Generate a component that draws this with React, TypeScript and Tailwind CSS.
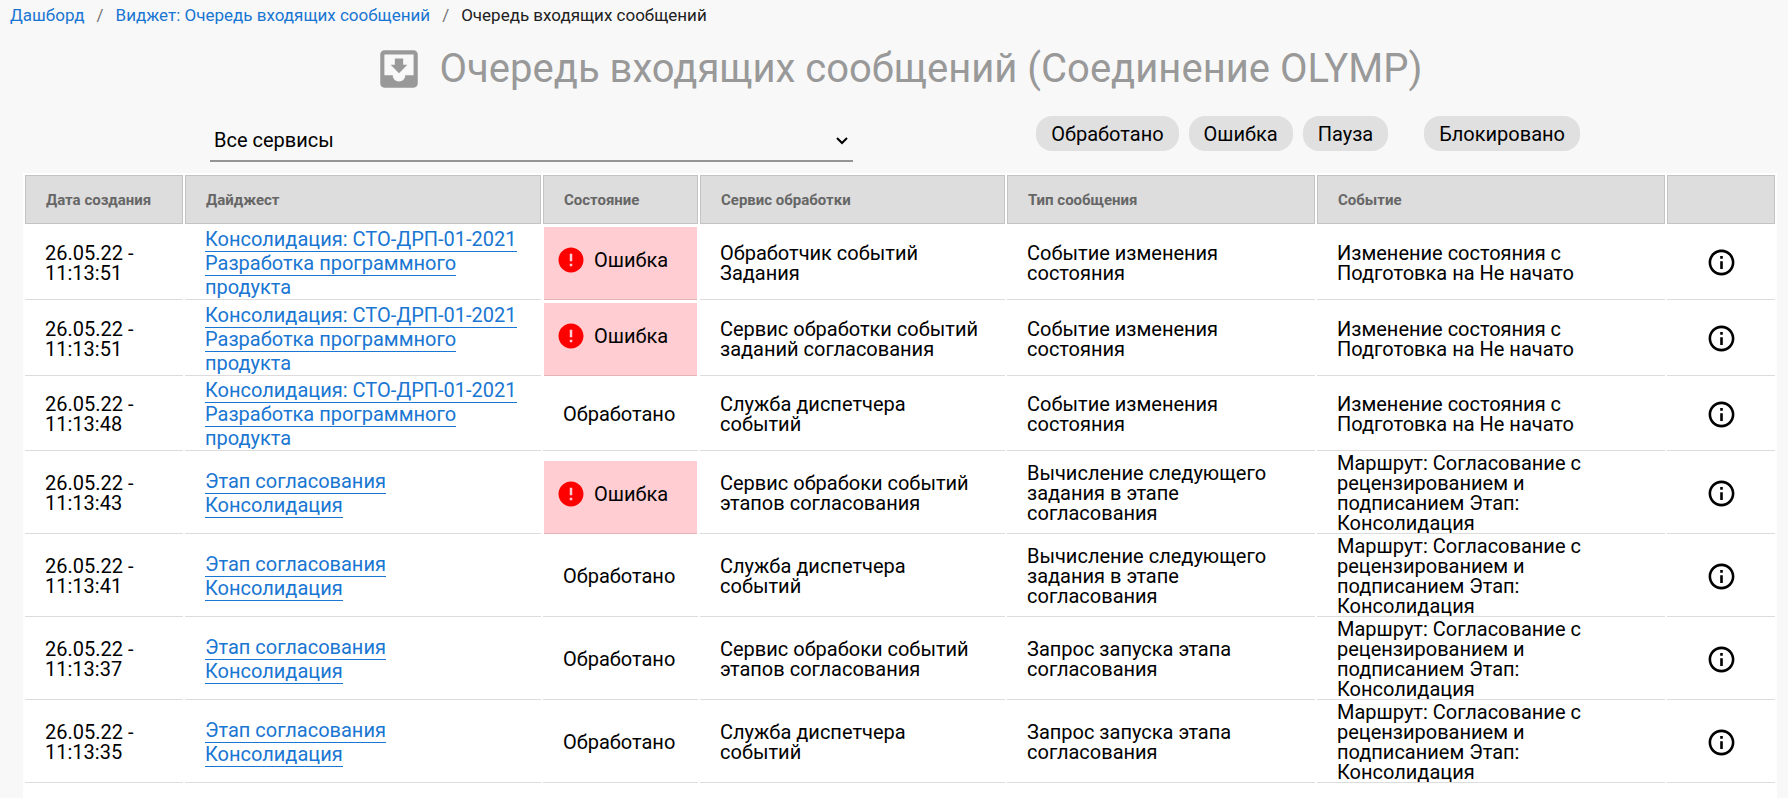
import { MdError, MdInfoOutline, MdMoveToInbox } from "react-icons/md";

type Message = {
  created: string;
  digest: string;
  failed: boolean;
  service: string;
  type: string;
  event: string;
};

const project = "Консолидация: СТО-ДРП-01-2021 Разработка программного продукта";
const stage = "Этап согласования Консолидация";
const stateChange = "Изменение состояния с Подготовка на Не начато";
const route = "Маршрут: Согласование с рецензированием и подписанием Этап: Консолидация";

const messages: Message[] = [
  { created: "26.05.22 - 11:13:51", digest: project, failed: true, service: "Обработчик событий Задания", type: "Событие изменения состояния", event: stateChange },
  { created: "26.05.22 - 11:13:51", digest: project, failed: true, service: "Сервис обработки событий заданий согласования", type: "Событие изменения состояния", event: stateChange },
  { created: "26.05.22 - 11:13:48", digest: project, failed: false, service: "Служба диспетчера событий", type: "Событие изменения состояния", event: stateChange },
  { created: "26.05.22 - 11:13:43", digest: stage, failed: true, service: "Сервис обрабоки событий этапов согласования", type: "Вычисление следующего задания в этапе согласования", event: route },
  { created: "26.05.22 - 11:13:41", digest: stage, failed: false, service: "Служба диспетчера событий", type: "Вычисление следующего задания в этапе согласования", event: route },
  { created: "26.05.22 - 11:13:37", digest: stage, failed: false, service: "Сервис обрабоки событий этапов согласования", type: "Запрос запуска этапа согласования", event: route },
  { created: "26.05.22 - 11:13:35", digest: stage, failed: false, service: "Служба диспетчера событий", type: "Запрос запуска этапа согласования", event: route },
];

const columns = [
  { label: "Дата создания", width: "w-[158px]" },
  { label: "Дайджест", width: "w-[356px]" },
  { label: "Состояние", width: "w-[155px]" },
  { label: "Сервис обработки", width: "w-[305px]" },
  { label: "Тип сообщения", width: "w-[308px]" },
  { label: "Событие", width: "w-[348px]" },
  { label: "", width: "w-[108px]" },
];

const Breadcrumbs = () => {
  return (
    <nav className="flex gap-3 px-[10px] pt-[3px] text-[17px] leading-6 text-[#212121]">
      <a href="#" className="text-[#1976d2]">Дашборд</a>
      <span className="text-[#757575]">/</span>
      <a href="#" className="text-[#1976d2]">Виджет: Очередь входящих сообщений</a>
      <span className="text-[#757575]">/</span>
      <span>Очередь входящих сообщений</span>
    </nav>
  );
};

const Chip = ({ label }: { label: string }) => (
  <button type="button" className="h-[35px] rounded-[16px] bg-[#e0e0e0] px-[15px] text-[20px] leading-6">
    {label}
  </button>
);

const Filters = () => {
  return (
    <div className="flex items-start pl-[210px] pr-[208px]">
      <div className="relative flex-1 border-b-2 border-[#949494]">
        <select aria-label="Сервис" className="h-11 w-full appearance-none bg-transparent px-1 pt-[3px] text-[20px] outline-none">
          <option>Все сервисы</option>
        </select>
        <svg viewBox="0 0 12 8" className="pointer-events-none absolute right-[5px] top-[21px] h-2 w-3" fill="none" stroke="black" strokeWidth="2">
          <path d="M1 1l5 5 5-5" />
        </svg>
      </div>
      <div className="ml-[183px] flex gap-[10px]">
        <Chip label="Обработано" />
        <Chip label="Ошибка" />
        <Chip label="Пауза" />
        <div className="ml-[26px]">
          <Chip label="Блокировано" />
        </div>
      </div>
    </div>
  );
};

const cell = "border-b border-[#dcdcdc] px-5";

const Row = ({ message: m }: { message: Message }) => {
  return (
    <tr>
      <td className={cell}>{m.created}</td>
      <td className={cell}>
        {/* three-line digests lose the last underline to the row border */}
        <div className="max-h-[72px] overflow-hidden pb-px leading-6">
          <a href="#" className="border-b border-[#1976d2] text-[#1976d2]">{m.digest}</a>
        </div>
      </td>
      {m.failed ? (
        <td className="px-px pt-px align-bottom">
          <div className="flex h-[73px] items-center gap-2 border-b border-[#e0b4b8] bg-[#ffcdd2] pb-[6px] pl-3">
            <MdError className="size-[30px] text-[#ff0000]" />
            Ошибка
          </div>
        </td>
      ) : (
        <td className={cell}>Обработано</td>
      )}
      <td className={cell}>{m.service}</td>
      <td className={cell}>{m.type}</td>
      <td className={cell}>{m.event}</td>
      <td className={cell}>
        <button type="button" aria-label="Информация" className="mx-auto block">
          <MdInfoOutline className="size-[31px]" />
        </button>
      </td>
    </tr>
  );
};

const App = () => {
  return (
    <div className="flex min-h-screen flex-col bg-[#f8f8f8] font-['Roboto',sans-serif] text-black">
      <Breadcrumbs />
      <h1 className="mt-[17px] flex items-center justify-center gap-4 pl-2 text-[40px] leading-12 text-[#999]">
        <MdMoveToInbox className="size-[50px]" />
        Очередь входящих сообщений (Соединение OLYMP)
      </h1>
      <div className="pb-[11px] pt-[22px]">
        <Filters />
      </div>
      <main className="ml-[23px] mr-[11px] flex-1 bg-white">
        <table className="w-full table-fixed border-separate border-spacing-[2px] text-[20px] leading-5">
          <thead>
            <tr>
              {columns.map((c) => (
                <th key={c.label} className={`${c.width} h-[49px] border border-[#c3c3c3] bg-[#ddd] px-5 text-left text-[15px] font-bold text-[#666]`}>
                  {c.label}
                </th>
              ))}
            </tr>
          </thead>
          <tbody>
            {messages.map((m) => (
              <Row key={m.created + m.service} message={m} />
            ))}
          </tbody>
        </table>
      </main>
    </div>
  );
};

export default App;
